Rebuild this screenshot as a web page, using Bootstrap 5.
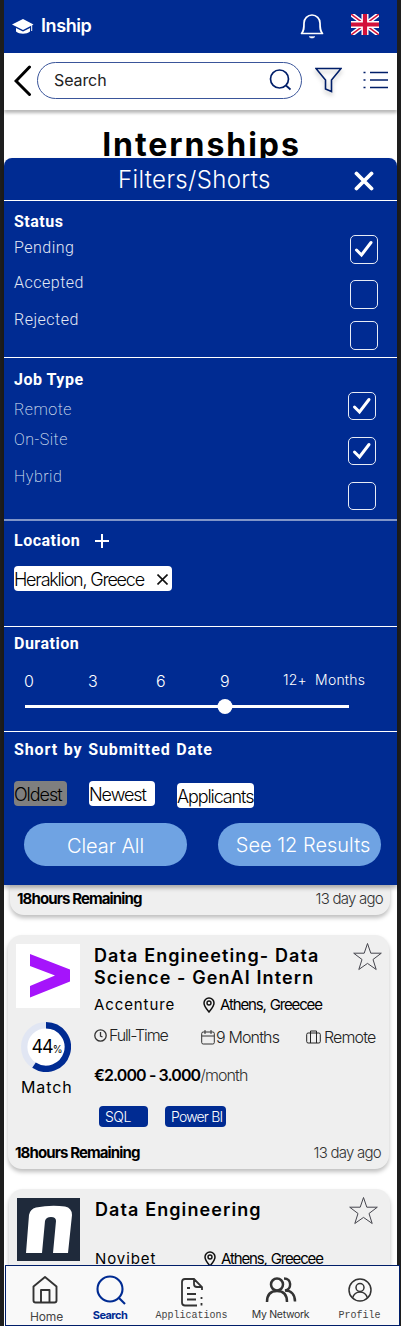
<!DOCTYPE html>
<html lang="en">
<head>
<meta charset="utf-8">
<meta name="viewport" content="width=device-width, initial-scale=1">
<title>Inship – Internships</title>
<link href="https://cdn.jsdelivr.net/npm/bootstrap@5.3.0/dist/css/bootstrap.min.css" rel="stylesheet">
<style>
:root{--navy:#002b92;--ink:#001e69}
body{background:#1e1e1e;font-family:Inter,"Liberation Sans",sans-serif;color:#000;height:1326px;overflow:hidden}
svg{display:block;flex:none}
.phone{width:393px;height:1326px;margin-left:4px;background:#fff;white-space:nowrap}
.topbar{height:53px;background:var(--navy);padding:0 18px 0 8px}
.brand-name{font-size:18px;font-weight:600;letter-spacing:-.4px;line-height:22px;margin:0 0 1px 7px}
.flag{margin-left:27px}
.searchbar{height:57px;padding:0 9px 3px 10px;position:relative;z-index:1;box-shadow:0 3px 3px rgba(0,0,0,.28);background:#fff}
.search-field{width:265px;height:37px;border:1px solid #3a559a;border-radius:19px;padding:0 10px 0 16px;font-size:16px;letter-spacing:-.1px;margin:0 13px 0 2px;color:#222}
.funnel{filter:drop-shadow(0 3px 2px rgba(0,0,0,.25))}
.page-title{height:48px;font-size:32px;font-weight:700;letter-spacing:1.95px;line-height:40px;padding:15px 0 0 2px;margin:0;text-align:center}
.panel{height:727px;background:var(--navy);color:#fff;border-radius:8px 8px 0 0;position:relative;z-index:1;box-shadow:0 3px 4px rgba(0,0,0,.3);font-family:Roboto,sans-serif}
.panel-head{height:43px;border-bottom:1px solid #fff;padding:0 23px 0 114px}
.panel-head h2{font:300 24px/30px Inter,sans-serif;letter-spacing:.35px;margin:2px 0 0}
.sect{border-bottom:1px solid #fff;padding-left:10px}
.panel h3{font-size:16px;font-weight:700;line-height:20px;letter-spacing:.5px;margin:0}
.opt{font-size:16px;line-height:20px;letter-spacing:.5px;font-weight:300;color:#e4e9f5}
.thin .opt{font-weight:200;color:#dde3f2}
.status{height:157px;padding-top:11px;padding-right:19px}
.status .opt:nth-child(2){margin-top:6px}
.status .opt:nth-child(3){margin-top:15px}
.status .opt:nth-child(4){margin-top:17px}
.box{width:28.500px;height:28.500px;border:1.5px solid #e7ebf5;border-radius:5px}
.status .boxes{padding-top:23px}
.status .box:nth-child(2){margin-top:16.500px}
.status .box:nth-child(3){margin-top:12.500px}
.jobs{height:163px;padding-top:12px;padding-right:21px;border-bottom:2px solid #8095c8}
.jobs .opt:nth-child(2),.jobs .opt:nth-child(3){margin-top:10px}
.jobs .opt:nth-child(4){margin-top:17px}
.jobs .boxes{padding-top:21.500px;gap:16.500px}
.location{height:106px;padding-top:10px}
.plus{margin-left:15px}
.pill{display:flex;align-items:center;height:25px;border-radius:4px;background:#fff;color:#000;font:300 18px/25px Inter,sans-serif;letter-spacing:-1.05px;padding:1px 0 0}
.loc-pill{width:158px;margin-top:15px;letter-spacing:-1.2px}
.duration{height:105px;padding-top:7px}
.scale{display:grid;grid-template-columns:64px 68px 64px 63px 1fr;padding-left:10px;margin-top:16px;font:300 16px/22px Inter,sans-serif}
.scale .last{font-size:14px;letter-spacing:.2px;line-height:20px}
.track{width:324px;height:3px;background:#fff;margin:13px 0 0 11px}
.thumb{width:15px;height:15px;border-radius:50%;background:#fff;position:absolute;top:-6px;transform:translateX(-50%)}
.sorting{padding:8px 0 0 10px}
.panel .sorting h3{letter-spacing:.9px;line-height:20px;word-spacing:.8px}
.pills{margin-top:21px}
.p-old{width:53px;background:#7f7f7f;margin-right:22px}
.p-new{width:66px;margin-right:22px}
.p-app{width:77px;margin-top:2px;letter-spacing:-1.1px}
.ctas{margin:15px 0 0 10px;gap:31px}
.cta{width:163px;height:43px;border-radius:22px;background:#6fa3e3;color:#fff;font:300 20px/40px Inter,sans-serif;letter-spacing:-.05px;padding:3px 0 0;text-align:center;border:0}
.cta+.cta{padding:1px 0 0 7px;line-height:42px;letter-spacing:0}
.cta:hover{background:#5f95d8;color:#fff}
.job{background:#efefef;border-radius:14px;box-shadow:0 3px 4px rgba(0,0,0,.25)}
.job-prev{margin:0 7px 0 6px;height:30px;border-radius:0 0 14px 14px;padding:3px 7px 0 7px}
.job-a{margin:20px 8px 0 4px;height:234px;padding:9px 8px 0}
.job-b{margin:20px 7px 0 5px;height:120px;padding:9px 8px 0}
.left-time{font-size:15px;font-weight:700;letter-spacing:-.88px;line-height:22px}
.ago{font-size:15px;font-weight:300;letter-spacing:-.75px;line-height:22px;color:#333}
.job-foot{margin:15px 0 0 -1px}
.logo-col{width:64px}
.job-body{margin-left:14px;width:291px}
.job-b .job-body{margin-left:15px}
.fav{margin:-2px -2px 0 0}
.job-b .fav{margin-right:3px}
.job-title{font-size:18px;font-weight:600;letter-spacing:1.1px;line-height:22px;margin:1px 0 0}
.meta{line-height:20px;font-size:15px;margin-top:6px}
.job-b .meta{margin-top:23px}
.company{width:109px;letter-spacing:.9px}
.city{letter-spacing:-1.15px;word-spacing:1px;margin-left:5px}
.facts{font-size:16px;font-weight:300;letter-spacing:-.85px;line-height:20px;color:#222;margin-top:9px}
.f1{width:107px;gap:2px;letter-spacing:-1.15px;padding-bottom:1px}
.f2{width:105px;gap:1px;padding-top:3px}
.f3{gap:3px;padding-top:3px}
.pay{font-size:16px;line-height:22px;letter-spacing:-.9px;margin-top:17px}
.pay b{font-weight:600}.pay span{font-weight:300;color:#333}
.skills{margin:20px 0 0 5px;gap:17px}
.skill{height:21px;border-radius:4px;background:var(--navy);color:#fff;font-size:14px;font-weight:300;line-height:22px;padding-left:6px;letter-spacing:-.5px;width:49px}
.skill+.skill{width:61px;letter-spacing:-.8px}
.match-label{font-size:16px;letter-spacing:.9px;line-height:20px;margin-top:5px;padding-left:5px}
.ring{margin:14px 0 0 5px;width:50px;height:50px;position:relative}
.ring-val{position:absolute;inset:0 0 0 2px;line-height:50px;font-size:18px;letter-spacing:-1px;text-align:center}
.ring-val small{font-size:10px;letter-spacing:0}
.tabbar{width:395px;height:61px;position:absolute;left:5px;top:1265px;z-index:3;background:#f9f9f9;border:1px solid var(--ink);padding-left:9px;color:#333;white-space:nowrap}
.tab{display:flex;flex-direction:column;align-items:center}
.tab svg{margin-bottom:auto}
.t1{width:63px;padding:10px 0 0}.t2{width:64px;padding-top:9px}.t3{width:99px;padding-top:12px}.t4{width:79px;padding-top:11px}.t5{width:79px;padding-top:12px}
.tab span{font-size:11px;line-height:14px;margin-bottom:1px}
.tab .mono{font-family:"Liberation Mono",monospace;font-size:10px;color:#444;margin-bottom:2px}
.tab.t1 svg{margin-left:-3px}
.tab.t1 span{font-size:12px;letter-spacing:-.1px;color:#444;margin-bottom:1px}
.tab.t2 svg{margin-left:2px}
.tab.t2 span{font-weight:700;color:var(--navy);font-size:11px;letter-spacing:-.55px;margin-bottom:3px}
.tab.t4 span{font-size:10.500px;letter-spacing:-.3px;margin-bottom:3px}
</style>
</head>
<body>
<svg width="0" height="0" class="position-absolute">
  <symbol id="tick" viewBox="0 0 25 25"><path d="M5.500 14l5 5L20 6.500" fill="none" stroke="#fff" stroke-width="3" stroke-linecap="round"/></symbol>
  <symbol id="star" viewBox="0 0 30 30"><path d="M14.500 1.500l3.300 9.700h10.500l-8.300 6.300 3.200 10-8.700-6.100-8.700 6.100 3.200-10L.7 11.200h10.500z" fill="none" stroke="#45454d" stroke-width="1"/></symbol>
  <symbol id="pin" viewBox="0 0 12 16"><path d="M6 15C4 12.500 1 9.300 1 6a5 5 0 0110 0c0 3.300-3 6.500-5 9z" fill="none" stroke="#111" stroke-width="1.500"/><circle cx="6" cy="6" r="2" fill="none" stroke="#111" stroke-width="1.400"/></symbol>
</svg>
<div class="phone">
  <header class="topbar d-flex align-items-center text-white">
    <svg width="22" height="16" viewBox="0 0 22 16"><path d="M11 0L21.500 5.500 11 11 0 5.500z" fill="#fff"/><path d="M4 9l7 3.500L18 9v3.500c-3.500 3-10.500 3-14 0z" fill="#fff"/><path d="M19.700 6v6" stroke="#fff" stroke-width="1"/></svg>
    <span class="brand-name">Inship</span>
    <svg class="ms-auto" width="24" height="26" viewBox="0 0 24 26" fill="none" stroke="#fff" stroke-width="1.700" stroke-linecap="round" stroke-linejoin="round"><path d="M1.500 19.500h21c-2.500-2.500-2.500-5-2.500-10.500a8 8 0 00-16 0c0 5.500 0 8-2.500 10.500z"/><path d="M9.500 23a3 2.500 0 005 0z" fill="#fff" stroke-width=".8"/></svg>
    <svg class="flag mb-1" width="28" height="21" viewBox="0 0 28 21"><path fill="#002b92" d="M0 0h28v21H0z"/><path d="M0 0l28 21M28 0L0 21" stroke="#fff" stroke-width="4.500"/><path d="M0 0l28 21M28 0L0 21" stroke="#d3123a" stroke-width="1.500"/><path d="M14 0v21M0 10.500h28" stroke="#fff" stroke-width="7"/><path d="M14 0v21M0 10.500h28" stroke="#d3123a" stroke-width="4.200"/></svg>
  </header>
  <div class="searchbar d-flex align-items-center">
    <svg width="21" height="31" viewBox="0 0 21 31"><path d="M15.500 2L2 16l13.500 13.500" fill="none" stroke="#000" stroke-width="3" stroke-linecap="round"/></svg>
    <div class="search-field d-flex align-items-center justify-content-between"><span>Search</span>
      <svg width="22" height="22" viewBox="0 0 22 22" fill="none" stroke="#001e69" stroke-width="1.700"><circle cx="10.500" cy="10" r="9"/><path d="M17 16.500l4.500 4"/></svg></div>
    <svg class="funnel" width="27" height="27" viewBox="0 0 27 27"><path d="M1 1.500h25L16.500 13v11.500l-6-2.500v-9z" fill="none" stroke="#001e69" stroke-width="1.600"/></svg>
    <svg class="ms-auto" width="25" height="20" viewBox="0 0 25 20" stroke="#001e69" stroke-width="1.700"><path d="M7 2.500h18M7 10h18M7 17.500h18M.5 2.500h2M.5 10h2M.5 17.500h2"/></svg>
  </div>
  <h1 class="page-title">Internships</h1>

  <section class="panel">
    <div class="panel-head d-flex align-items-center justify-content-between">
      <h2>Filters/Shorts</h2>
      <svg width="20" height="20" viewBox="0 0 20 20" class="mt-1"><path d="M2.500 2.500l15 15M17.500 2.500l-15 15" stroke="#fff" stroke-width="3.800" stroke-linecap="round"/></svg>
    </div>
    <div class="sect status d-flex justify-content-between">
      <div><h3>Status</h3><div class="opt">Pending</div><div class="opt">Accepted</div><div class="opt">Rejected</div></div>
      <div class="boxes"><div class="box"><svg width="25" height="25"><use href="#tick"/></svg></div><div class="box"></div><div class="box"></div></div>
    </div>
    <div class="sect jobs thin d-flex justify-content-between">
      <div><h3>Job Type</h3><div class="opt">Remote</div><div class="opt">On-Site</div><div class="opt">Hybrid</div></div>
      <div class="boxes d-flex flex-column"><div class="box"><svg width="25" height="25"><use href="#tick"/></svg></div><div class="box"><svg width="25" height="25"><use href="#tick"/></svg></div><div class="box"></div></div>
    </div>
    <div class="sect location">
      <div class="d-flex align-items-center"><h3>Location</h3><svg class="plus" width="14" height="14" viewBox="0 0 14 14"><path d="M7 0v14M0 7h14" stroke="#fff" stroke-width="2"/></svg></div>
      <div class="pill loc-pill">Heraklion, Greece<svg class="ms-auto me-1" width="11" height="11" viewBox="0 0 11 11"><path d="M.5.5l10 10M10.500.5l-10 10" stroke="#111" stroke-width="1.600"/></svg></div>
    </div>
    <div class="sect duration">
      <h3>Duration</h3>
      <div class="scale"><span>0</span><span>3</span><span>6</span><span>9</span><span class="last">12+&nbsp; Months</span></div>
      <div class="track position-relative"><div class="thumb" style="left:61.8%"></div></div>
    </div>
    <div class="sorting">
      <h3>Short by Submitted Date</h3>
      <div class="pills d-flex align-items-start"><div class="pill p-old">Oldest</div><div class="pill p-new">Newest</div><div class="pill p-app">Applicants</div></div>
      <div class="ctas d-flex"><button class="cta">Clear All</button><button class="cta">See 12 Results</button></div>
    </div>
  </section>

  <div class="job job-prev d-flex justify-content-between"><span class="left-time">18hours Remaining</span><span class="ago">13 day ago</span></div>

  <article class="job job-a">
    <div class="d-flex">
      <div class="logo-col">
        <svg width="64" height="64" viewBox="0 0 64 64"><path fill="#fff" d="M0 0h64v64H0z"/><path d="M14 10l40 15.500v12L14 53.500V42l25-10.500-25-9.500z" fill="#a514fb"/></svg>
        <div class="ring"><svg width="50" height="50" viewBox="0 0 50 50"><circle cx="25" cy="25" r="21.800" fill="#fff" stroke="#e1e6f3" stroke-width="6.400"/><path d="M25 3.200a21.800 21.800 0 11-12 40" fill="none" stroke="#002b92" stroke-width="6.400"/></svg><div class="ring-val">44<small>%</small></div></div>
        <div class="match-label">Match</div>
      </div>
      <div class="job-body">
        <div class="d-flex justify-content-between align-items-start"><h4 class="job-title">Data Engineeting- Data<br>Science - GenAI Intern</h4><svg class="fav" width="30" height="30"><use href="#star"/></svg></div>
        <div class="meta d-flex align-items-center"><span class="company">Accenture</span><svg width="12" height="16"><use href="#pin"/></svg><span class="city">Athens, Greecee</span></div>
        <div class="facts d-flex align-items-center">
          <div class="f1 d-flex align-items-center"><svg width="13" height="13" viewBox="0 0 13 13" fill="none" stroke="#333" stroke-width="1.300"><circle cx="6.500" cy="6.500" r="5.700"/><path d="M6.500 3v4l2 1"/></svg>Full-Time</div>
          <div class="f2 d-flex align-items-center"><svg width="14" height="15" viewBox="0 0 14 15" fill="none" stroke="#333"><rect x=".7" y="2" width="12.600" height="12" rx="1.500"/><path d="M.7 6h12.600M4 0v4M10 0v4"/></svg>9 Months</div>
          <div class="f3 d-flex align-items-center"><svg width="15" height="14" viewBox="0 0 15 14" fill="none" stroke="#222"><rect x=".7" y="3" width="13.600" height="10" rx="1.500"/><path d="M4.500 13V1h6v12"/></svg>Remote</div>
        </div>
        <div class="pay"><b>€2.000 - 3.000</b><span>/month</span></div>
        <div class="skills d-flex"><div class="skill">SQL</div><div class="skill">Power BI</div></div>
      </div>
    </div>
    <div class="job-foot d-flex justify-content-between"><span class="left-time">18hours Remaining</span><span class="ago">13 day ago</span></div>
  </article>

  <article class="job job-b">
    <div class="d-flex">
      <svg width="63" height="63" viewBox="0 0 63 63"><path fill="#1f2a3b" d="M0 0h63v63H0z"/><path d="M12 17q1-6 7-7.500 15-3 29-1 7 1.500 7 8.500l-4 38H36l3-32q0-4-5-4t-6 4l-3 32H9z" fill="#fff"/></svg>
      <div class="job-body">
        <div class="d-flex justify-content-between align-items-start"><h4 class="job-title">Data Engineering</h4><svg class="fav" width="30" height="30"><use href="#star"/></svg></div>
        <div class="meta d-flex align-items-center"><span class="company">Novibet</span><svg width="12" height="16"><use href="#pin"/></svg><span class="city">Athens, Greecee</span></div>
      </div>
    </div>
  </article>
</div>
<nav class="tabbar d-flex">
  <div class="tab t1"><svg width="26" height="28" viewBox="0 0 26 28" fill="none" stroke="#333" stroke-width="1.900" stroke-linejoin="round"><path d="M1.500 10.500L13 1l11.500 9.500V24.500q0 2-2 2h-19q-2 0-2-2z"/><path d="M9 26.500V14h8.500v12.500"/></svg><span>Home</span></div>
  <div class="tab t2"><svg width="30" height="30" viewBox="0 0 30 30" fill="none" stroke="#002b92" stroke-width="2.100"><circle cx="14" cy="14" r="12.500"/><path d="M22.500 22.500l6.500 6.500"/></svg><span>Search</span></div>
  <div class="tab t3"><svg width="22" height="29" viewBox="0 0 22 29" fill="none" stroke="#333" stroke-width="1.800"><path d="M16 27.500H4q-3 0-3-3V4q0-3 3-3h9l8 8v3M13 1v5q0 3 3 3h5M6 10h3M6 16h9M6 21.500h9M20.500 19v2M20.500 25v2.500"/></svg><span class="mono">Applications</span></div>
  <div class="tab t4"><svg width="32" height="26" viewBox="0 0 32 26" fill="none" stroke="#333" stroke-width="2.500"><circle cx="12" cy="7.500" r="6"/><path d="M2 25q0-11 10-11t10 11M19 1.500c8 0 8 11 1 12 6 0 10 4 10 11"/></svg><span>My Network</span></div>
  <div class="tab t5"><svg width="24" height="24" viewBox="0 0 24 24" fill="none" stroke="#333" stroke-width="1.500"><circle cx="12" cy="12" r="11"/><circle cx="12" cy="9.500" r="4"/><path d="M4.500 20q2-6 7.500-6t7.500 6"/></svg><span class="mono">Profile</span></div>
</nav>
<script src="https://cdn.jsdelivr.net/npm/bootstrap@5.3.0/dist/js/bootstrap.bundle.min.js"></script>
</body>
</html>
